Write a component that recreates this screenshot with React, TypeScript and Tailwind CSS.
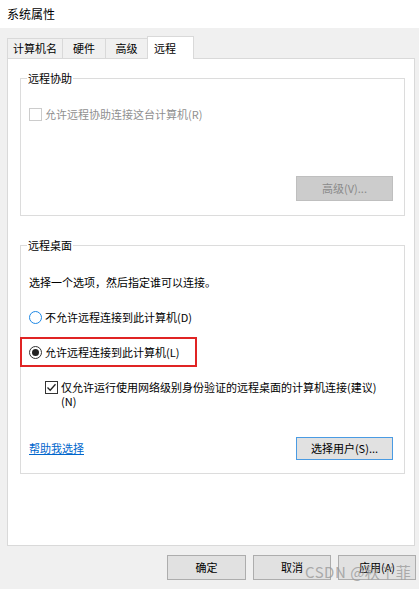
import React from "react";

const font = { fontFamily: '"Noto Sans CJK SC", "Noto Sans", sans-serif' };

const Tab = ({ label, active, w }: { label: string; active?: boolean; w: string }) => {
  if (active) {
    return (
      <div
        className={`${w} h-[23px] -mb-px -ml-px relative z-10 bg-white border border-b-0 border-[#d9d9d9] flex items-center pl-[6px] text-[11px]`}
      >
        {label}
      </div>
    );
  }
  return (
    <div
      className={`${w} h-[20px] -ml-px first:ml-0 bg-[#f0f0f0] border border-b-0 border-[#d9d9d9] flex items-center justify-center text-[11px]`}
    >
      {label}
    </div>
  );
};

const GroupBox = ({ title, className, children }: { title: string; className: string; children: React.ReactNode }) => (
  <div className={`relative border border-[#dcdcdc] ${className}`}>
    <span className="absolute -top-[9px] left-[6px] bg-white px-[1px] text-[11px] leading-[16px]">{title}</span>
    {children}
  </div>
);

const Check = ({ checked, disabled }: { checked?: boolean; disabled?: boolean }) => (
  <span
    className={`w-[13px] h-[13px] shrink-0 border bg-white flex items-center justify-center ${
      disabled ? "border-[#cccccc]" : "border-[#333333]"
    }`}
  >
    {checked && (
      <svg width="11" height="11" viewBox="0 0 11 11">
        <path d="M1.5 5.5 L4.2 8.3 L9.5 2.2" fill="none" stroke="#222" strokeWidth="1.3" />
      </svg>
    )}
  </span>
);

const Radio = ({ checked }: { checked?: boolean }) => (
  <span
    className={`w-[13px] h-[13px] shrink-0 rounded-full border bg-white flex items-center justify-center ${
      checked ? "border-[#333333]" : "border-[#1e88e5]"
    }`}
  >
    {checked && <span className="w-[7px] h-[7px] rounded-full bg-[#222]" />}
  </span>
);

export default function App() {
  return (
    <div className="w-[419px] h-[589px] bg-[#f0f0f0] text-black relative overflow-hidden" style={font}>
      <div className="h-[28px] bg-white flex items-center pl-[7px] text-[12px]">系统属性</div>

      <div className="pt-[8px] pl-[7px] flex items-end h-[30px]">
        <Tab label="计算机名" w="w-[56px]" />
        <Tab label="硬件" w="w-[44px]" />
        <Tab label="高级" w="w-[43px]" />
        <Tab label="远程" w="w-[47px]" active />
      </div>

      <div className="ml-[7px] w-[408px] h-[488px] bg-white border border-[#d9d9d9] pl-[12px] pt-[19px] text-[11px]">
        <GroupBox title="远程协助" className="w-[385px] h-[138px] flex flex-col">
          <div className="mt-[28px] ml-[8px] flex items-center gap-[3px] h-[14px] text-[#8f8f8f]">
            <Check disabled />
            <span>允许远程协助连接这台计算机(R)</span>
          </div>
          <div className="flex-1" />
          <div className="flex justify-end pr-[11px] pb-[14px]">
            <div className="w-[97px] h-[25px] bg-[#cccccc] border border-[#bfbfbf] flex items-center justify-center text-[#8a8a8a]">
              高级(V)...
            </div>
          </div>
        </GroupBox>

        <GroupBox title="远程桌面" className="mt-[29px] w-[385px] h-[229px] flex flex-col pl-[8px]">
          <div className="mt-[28px] h-[16px] flex items-center">选择一个选项，然后指定谁可以连接。</div>
          <div className="mt-[19px] h-[16px] flex items-center gap-[3px]">
            <Radio />
            <span>不允许远程连接到此计算机(D)</span>
          </div>
          <div className="mt-[19px] h-[16px] flex items-center gap-[3px] relative">
            <Radio checked />
            <span>允许远程连接到此计算机(L)</span>
            <span className="absolute -left-[9px] -top-[7px] w-[177px] h-[30px] border-2 border-[#e02424]" />
          </div>
          <div className="mt-[20px] pl-[16px] flex items-start gap-[3px] leading-[14px]">
            <span className="mt-[1px]">
              <Check checked />
            </span>
            <span>
              仅允许运行使用网络级别身份验证的远程桌面的计算机连接(建议)
              <br />
              (N)
            </span>
          </div>
          <div className="flex-1" />
          <div className="flex items-center justify-between pr-[11px] pb-[13px]">
            <span className="text-[#0066cc] underline">帮助我选择</span>
            <div className="w-[97px] h-[23px] bg-[#e1e1e1] border border-[#4a9be3] flex items-center justify-center">
              选择用户(S)...
            </div>
          </div>
        </GroupBox>
      </div>

      <div className="mt-[9px] flex justify-end gap-[7px] pr-[3px] text-[11px]">
        <div className="w-[79px] h-[25px] bg-[#e1e1e1] border border-[#adadad] flex items-center justify-center">确定</div>
        <div className="w-[78px] h-[25px] bg-[#e1e1e1] border border-[#adadad] flex items-center justify-center">取消</div>
        <div className="w-[78px] h-[25px] bg-[#e1e1e1] border border-[#adadad] flex items-center justify-center">应用(A)</div>
      </div>

      <span className="absolute left-[305px] top-[561px] text-[15px] text-[#9a9a9a]/80 tracking-[0.5px]">CSDN @秋丫菲</span>
    </div>
  );
}
